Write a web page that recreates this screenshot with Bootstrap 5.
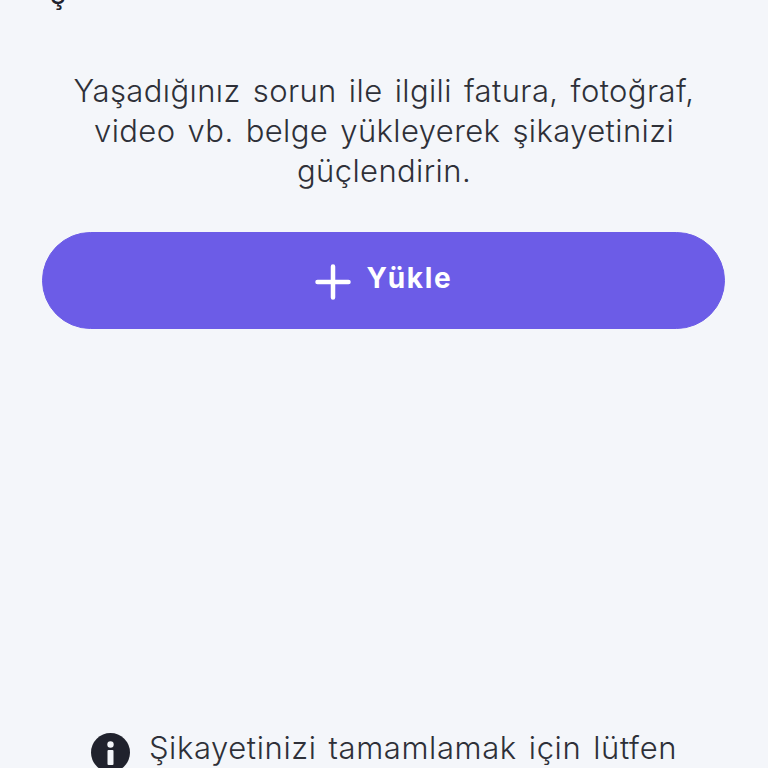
<!DOCTYPE html>
<html lang="tr">
<head>
    <meta charset="UTF-8">
    <meta name="viewport" content="width=device-width, initial-scale=1">
    <link rel="stylesheet" href="https://cdn.jsdelivr.net/npm/bootstrap@5.3.0/dist/css/bootstrap.min.css">
    <style>
        html, body { height: 768px; overflow: hidden; }
        body { background: #f4f6fa; font-family: "Inter", "Noto Sans", sans-serif; color: #2e3038; }
        .screen { height: 768px; overflow: hidden; }
        .screen > * { flex-shrink: 0; }
        .top-cut { height: 71px; overflow: hidden; position: relative; }
        .top-cut span { position: absolute; left: 50px; bottom: 58px; font-size: 30px; line-height: 40px; color: #20222d; }
        .intro { font-size: 31px; line-height: 40px; font-weight: 300; letter-spacing: .4px; word-spacing: 3px; margin: 0; }
        .upload-btn { height: 97px; margin: 41px 43px 0 42px; background: #6c5ce7; border-color: #6c5ce7; border-radius: 49px; font-size: 28px; font-weight: 700; letter-spacing: 1.7px; padding-bottom: 12px; }
        .upload-btn:hover { background: #6c5ce7; border-color: #6c5ce7; }
        .notice { margin-top: 399px; font-size: 31px; line-height: 40px; font-weight: 300; letter-spacing: .6px; word-spacing: 2.7px; gap: 19px; }
        .plus-icon { margin-top: 9px; }
        .info-icon { margin-top: 5px; }
    </style>
    <title>Şikayet</title>
</head>
<body>
    <div class="screen d-flex flex-column">
        <div class="top-cut"><span>ş</span></div>
        <p class="intro text-center">Yaşadığınız sorun ile ilgili fatura, fotoğraf,<br>video vb. belge yükleyerek şikayetinizi<br>güçlendirin.</p>
        <button type="button" class="btn btn-primary upload-btn d-flex align-items-center justify-content-center gap-3 text-white">
            <svg class="plus-icon" width="36" height="36" viewBox="0 0 36 36" fill="none" stroke="#fff" stroke-width="4.5" stroke-linecap="round"><path d="M18 2.5v31M2.5 18h31"/></svg>
            <span>Yükle</span>
        </button>
        <div class="notice d-flex align-items-start justify-content-center">
            <svg class="info-icon flex-shrink-0" width="39" height="39" viewBox="0 0 39 39"><circle cx="19.5" cy="19.5" r="19.5" fill="#20222d"/><circle cx="19.5" cy="11.5" r="3.2" fill="#f4f6fa"/><rect x="16.5" y="17" width="6" height="15" rx="1" fill="#f4f6fa"/></svg>
            <span>Şikayetinizi tamamlamak için lütfen</span>
        </div>
    </div>
    <script src="https://cdn.jsdelivr.net/npm/bootstrap@5.3.0/dist/js/bootstrap.bundle.min.js"></script>
</body>
</html>
